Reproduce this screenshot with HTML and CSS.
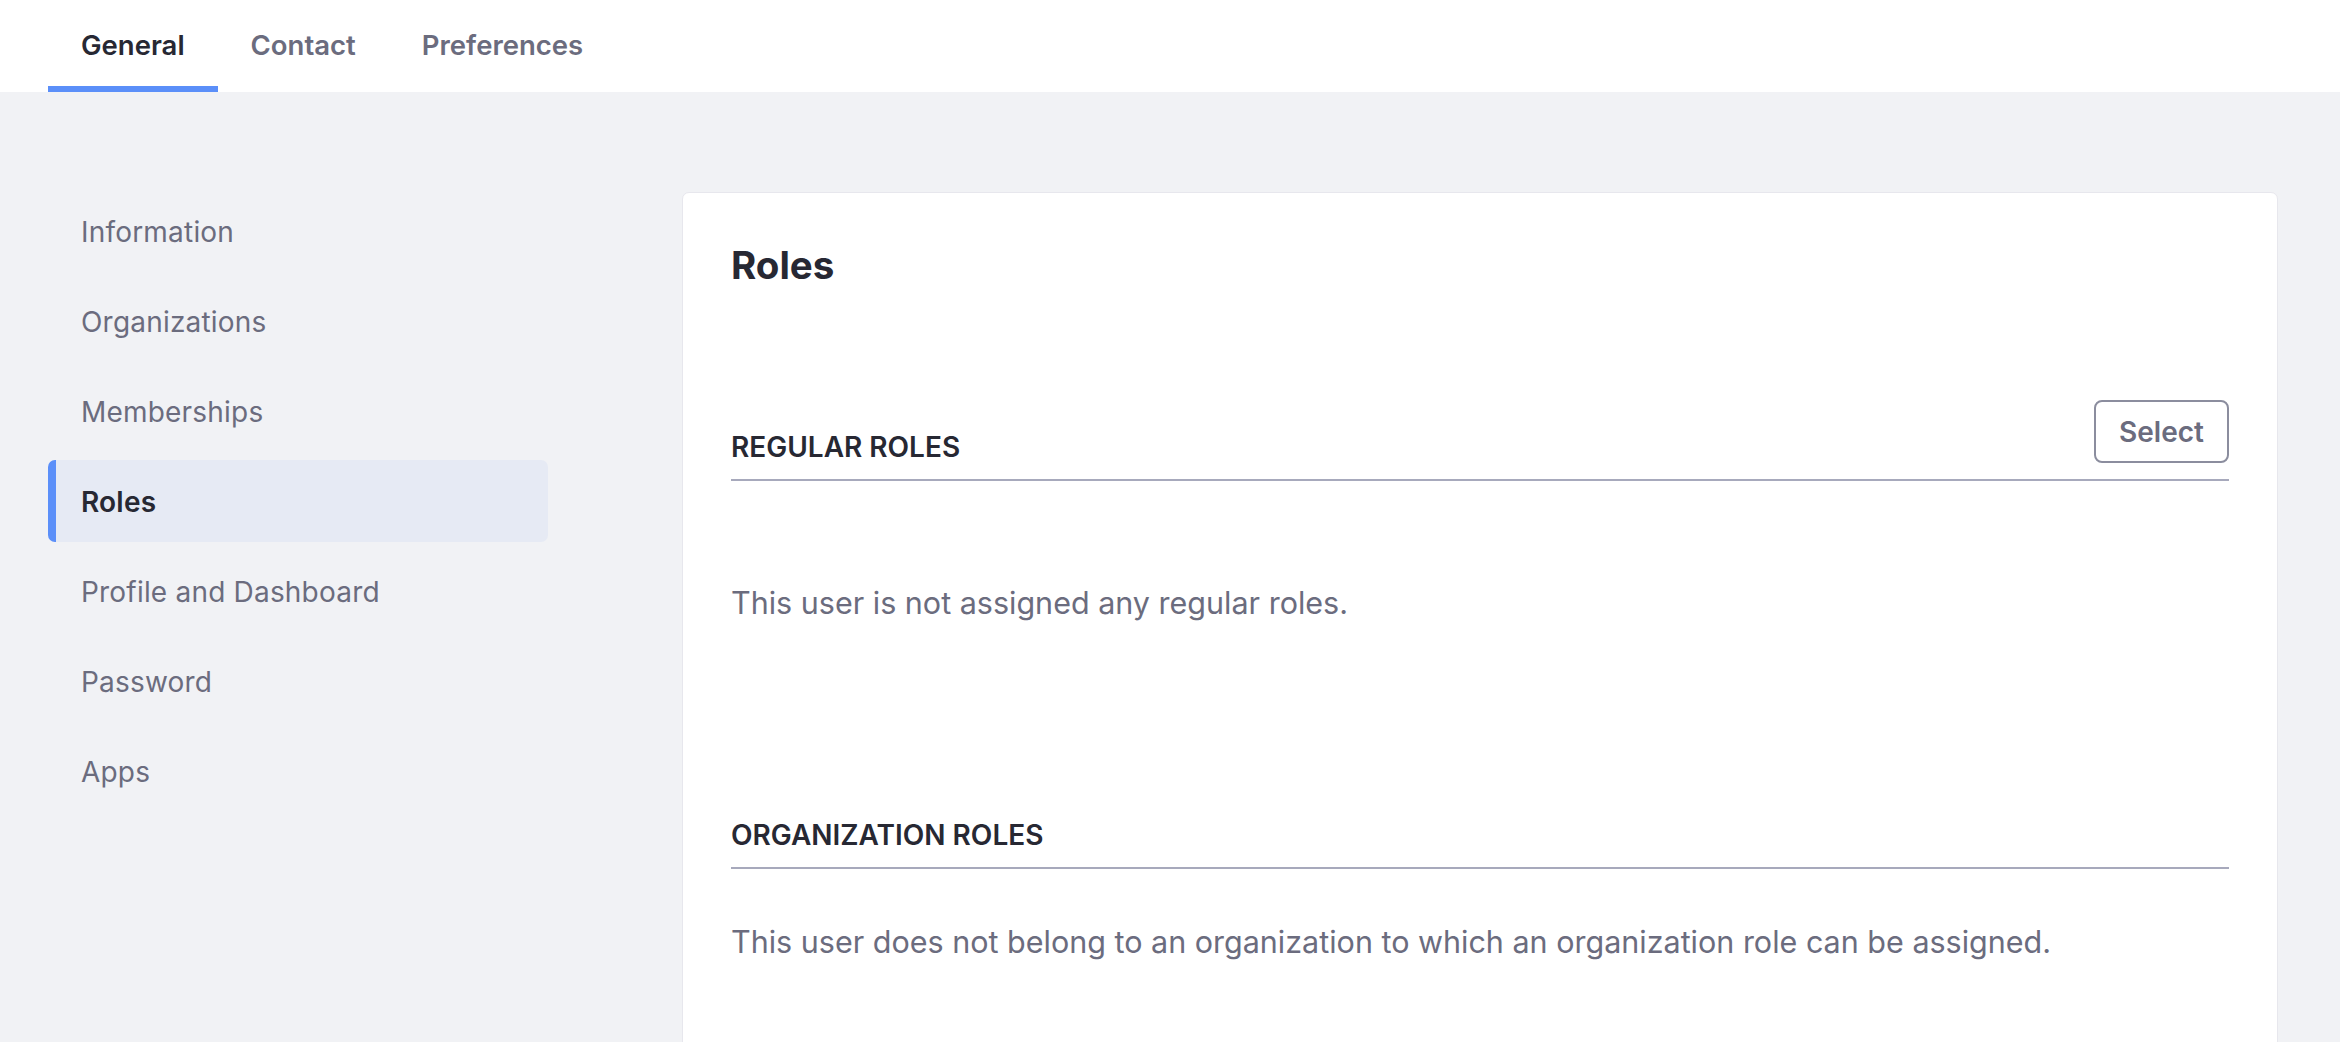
FILE: index.html
```html
<!DOCTYPE html>
<html lang="en">
<head>
<meta charset="utf-8">
<title>Roles</title>
<link rel="stylesheet" href="styles.css">
</head>
<body>
<header class="topbar">
  <nav class="tabs">
    <a class="tab active">General</a>
    <a class="tab">Contact</a>
    <a class="tab">Preferences</a>
  </nav>
</header>
<main class="main">
  <aside class="sidenav">
    <a class="side-item">Information</a>
    <a class="side-item">Organizations</a>
    <a class="side-item">Memberships</a>
    <a class="side-item active">Roles</a>
    <a class="side-item">Profile and Dashboard</a>
    <a class="side-item">Password</a>
    <a class="side-item">Apps</a>
  </aside>
  <section class="card">
    <h1 class="card-title">Roles</h1>
    <div class="section-head first">
      <h2 class="section-title">Regular Roles</h2>
      <button class="btn">Select</button>
    </div>
    <p class="empty first-empty">This user is not assigned any regular roles.</p>
    <div class="section-head second">
      <h2 class="section-title">Organization Roles</h2>
    </div>
    <p class="empty second-empty">This user does not belong to an organization to which an organization role can be assigned.</p>
  </section>
</main>
</body>
</html>
```

FILE: styles.css
```css
* { box-sizing: border-box; }
html, body {
  margin: 0;
  padding: 0;
  height: 100%;
}
body {
  background: #f1f2f5;
  font-family: Inter, "Noto Sans", "Liberation Sans", sans-serif;
  color: #6b6c7e;
  overflow: hidden;
}
.topbar {
  background: #ffffff;
  height: 92px;
  padding-left: 48px;
}
.tabs {
  display: flex;
  height: 100%;
}
.tab {
  display: flex;
  align-items: center;
  padding: 4px 33px 0 33px;
  font-size: 27.5px;
  font-weight: 600;
  color: #6b6c7e;
  border-bottom: 6px solid transparent;
  text-decoration: none;
}
.tab.active {
  color: #272833;
  border-bottom-color: #5b8ff9;
}
.main {
  display: flex;
  gap: 134px;
  padding: 98px 62px 0 48px;
}
.sidenav {
  width: 500px;
  flex: none;
  display: flex;
  flex-direction: column;
  gap: 8px;
}
.side-item {
  display: flex;
  align-items: center;
  height: 82px;
  padding: 2px 0 0 25px;
  border-left: 8px solid transparent;
  border-radius: 7px;
  font-size: 28px;
  color: #6b6c7e;
  letter-spacing: 0.2px;
}
.side-item.active {
  background: #e6eaf4;
  border-left-color: #5b8ff9;
  color: #272833;
  font-weight: 600;
}
.card {
  flex: 1;
  margin-top: 2px;
  background: #ffffff;
  border: 1px solid #e7e7ed;
  border-radius: 7px;
  padding: 50px 48px 60px 48px;
  min-height: 900px;
}
.card-title {
  margin: 0;
  font-size: 38.5px;
  line-height: 44px;
  font-weight: 700;
  color: #272833;
}
.section-head {
  display: flex;
  justify-content: space-between;
  align-items: flex-end;
  padding-bottom: 16px;
  border-bottom: 2px solid #a7a9bc;
}
.section-head.first { margin-top: 113px; }
.section-head.second { margin-top: 198px; }
.section-title {
  margin: 0;
  font-size: 28px;
  line-height: 32px;
  font-weight: 600;
  text-transform: uppercase;
  color: #272833;
}
.btn {
  height: 63px;
  width: 135px;
  background: #ffffff;
  border: 2px solid #8b8d9e;
  border-radius: 8px;
  font-family: inherit;
  font-size: 28px;
  font-weight: 600;
  color: #6b6c7e;
}
.empty {
  margin: 0;
  font-size: 30.5px;
  line-height: 36px;
  color: #6b6c7e;
}
.first-empty { margin-top: 104px; }
.second-empty { margin-top: 55px; }
```
